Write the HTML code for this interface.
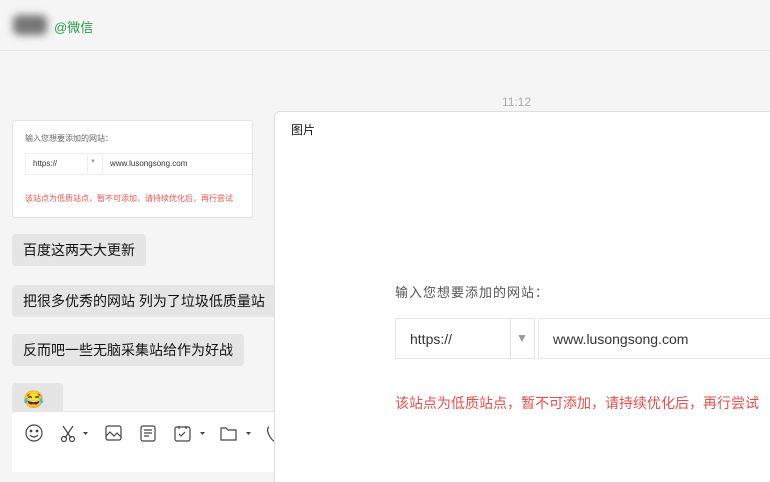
<!DOCTYPE html><html><head><meta charset="utf-8"><style>
body{margin:0;width:770px;height:471px;overflow:hidden;background:#f5f5f5;font-family:"Liberation Sans","Noto Sans CJK SC",sans-serif;position:relative}
.a{position:absolute}
.b{position:absolute;left:12px;background:#e5e5e5;border-radius:4px;height:32px;line-height:32px;padding:0 11px;font-size:14px;color:#111}
svg{position:absolute}
</style></head><body>
<div class="a" style="left:0;top:0;width:770px;height:50px;border-bottom:1px solid #e3e3e3"></div>
<div class="a" style="left:13px;top:15px;width:34px;height:20px;background:#777;filter:blur(4px);border-radius:6px"></div>
<div class="a" style="left:54px;top:17px;font-size:13px;color:#2a9a4a">@微信</div>
<div class="a" style="left:502px;top:95px;font-size:12px;color:#aaa">11:12</div>
<div class="a" style="left:12px;top:120px;width:239px;height:96px;background:#fff;border:1px solid #e2e2e2;border-radius:3px">
<div class="a" style="left:12px;top:12px;font-size:8px;color:#666">输入您想要添加的网站：</div>
<div class="a" style="left:12px;top:32px;width:228px;height:20px;border:1px solid #eee;border-right:none"></div>
<div class="a" style="left:74px;top:32px;width:1px;height:22px;background:#eee"></div>
<div class="a" style="left:89px;top:32px;width:1px;height:22px;background:#eee"></div>
<div class="a" style="left:20px;top:38px;font-size:8px;color:#333">https://</div>
<div class="a" style="left:77px;top:38px;font-size:6px;color:#999">▼</div>
<div class="a" style="left:97px;top:38px;font-size:8px;color:#333">www.lusongsong.com</div>
<div class="a" style="left:12px;top:72px;font-size:8px;color:#e55">该站点为低质站点，暂不可添加，请持续优化后，再行尝试</div>
</div>
<div class="b" style="top:234px">百度这两天大更新</div>
<div class="b" style="top:285px">把很多优秀的网站 列为了垃圾低质量站</div>
<div class="b" style="top:334px">反而吧一些无脑采集站给作为好战</div>
<div class="b" style="top:383px;height:30px;width:29px;padding:0 11px;line-height:34px;font-size:17px">😂</div>
<div class="a" style="left:12px;top:411px;width:262px;height:60px;background:#fff;border-top:1px solid #e5e5e5;border-radius:4px 0 0 0"></div>
<svg style="left:24px;top:423px" width="260" height="20" fill="none" stroke="#444" stroke-width="1.2">
<circle cx="10" cy="10" r="8"/><circle cx="7" cy="8" r=".8" fill="#444"/><circle cx="13" cy="8" r=".8" fill="#444"/><path d="M6 12q4 4 8 0"/>
<path d="M39 3l8 12M49 3l-8 12"/><circle cx="40" cy="16" r="2.5"/><circle cx="48" cy="16" r="2.5"/><path d="M59 9h5l-2.5 3z" fill="#444" stroke="none"/>
<rect x="82" y="3" width="15" height="14" rx="2"/><path d="M82 13l4-4 4 4 3-3 4 4"/>
<rect x="117" y="3" width="14" height="15" rx="2"/><path d="M120 7h8M120 10h8M120 13h5"/>
<rect x="151" y="4" width="15" height="14" rx="2"/><path d="M155 3v3M162 3v3M155 11l2 2 4-4"/><path d="M176 9h5l-2.5 3z" fill="#444" stroke="none"/>
<path d="M197 5h5l2 2h8v10h-15z"/><path d="M222 9h5l-2.5 3z" fill="#444" stroke="none"/>
<path d="M245 4q-3 2 0 8t7 7"/>
</svg>
<div class="a" style="left:274px;top:111px;width:500px;height:370px;background:#fff;border-left:1px solid #ddd;border-top:1px solid #ddd;border-radius:6px 0 0 0">
<div class="a" style="left:16px;top:9px;font-size:12px;color:#111">图片</div>
<div class="a" style="left:120px;top:170px;font-size:13px;letter-spacing:1px;color:#555">输入您想要添加的网站：</div>
<div class="a" style="left:120px;top:206px;width:138px;height:39px;border:1px solid #e5e5e5"></div>
<div class="a" style="left:235px;top:206px;width:1px;height:41px;background:#e5e5e5"></div>
<div class="a" style="left:263px;top:206px;width:300px;height:39px;border:1px solid #e5e5e5"></div>
<div class="a" style="left:135px;top:219px;font-size:14px;color:#333">https://</div>
<div class="a" style="left:241px;top:219px;font-size:12px;color:#999">▼</div>
<div class="a" style="left:278px;top:219px;font-size:14px;color:#333">www.lusongsong.com</div>
<div class="a" style="left:120px;top:281px;font-size:14px;color:#e54d4d">该站点为低质站点，暂不可添加，请持续优化后，再行尝试</div>
</div>
</body></html>
